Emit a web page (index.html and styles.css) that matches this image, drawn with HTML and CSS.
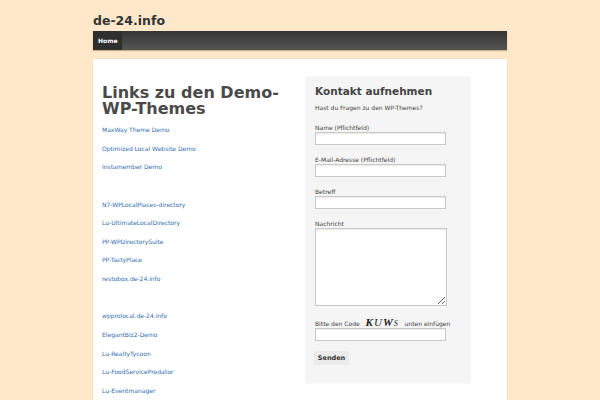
FILE: index.html
```html
<!DOCTYPE html>
<html lang="de">
<head>
    <meta charset="UTF-8">
    <meta name="viewport" content="width=device-width, initial-scale=1.0">
    <title>de-24.info</title>
    <link rel="stylesheet" href="styles.css">
</head>
<body>
    <div class="wrapper">
        <div class="site-title">de-24.info</div>
        <nav class="nav">
            <a class="nav-item active" href="#">Home</a>
        </nav>

        <div class="content">
            <div class="main">
                <h1>Links zu den Demo-WP-Themes</h1>
                <ul class="links">
                    <li><a href="#">MaxWay Theme Demo</a></li>
                    <li><a href="#">Optimized Local Website Demo</a></li>
                    <li><a href="#">Instamember Demo</a></li>
                    <li class="blank"></li>
                    <li><a href="#">N7-WPLocalPlaces-directory</a></li>
                    <li><a href="#">Lu-UltimateLocalDirectory</a></li>
                    <li><a href="#">PP-WPDirectorySuite</a></li>
                    <li><a href="#">PP-TastyPlace</a></li>
                    <li><a href="#">restobox.de-24.info</a></li>
                    <li class="blank"></li>
                    <li><a href="#">wpprolocal.de-24.info</a></li>
                    <li><a href="#">ElegantBiz2-Demo</a></li>
                    <li><a href="#">Lu-RealtyTycoon</a></li>
                    <li><a href="#">Lu-FoodServicePredator</a></li>
                    <li><a href="#">Lu-Eventmanager</a></li>
                </ul>
            </div>

            <div class="sidebar">
                <h2>Kontakt aufnehmen</h2>
                <p class="intro">Hast du Fragen zu den WP-Themes?</p>
                <div class="field">
                    <label>Name (Pflichtfeld)</label>
                    <input type="text">
                </div>
                <div class="field">
                    <label>E-Mail-Adresse (Pflichtfeld)</label>
                    <input type="text">
                </div>
                <div class="field">
                    <label>Betreff</label>
                    <input type="text">
                </div>
                <div class="field">
                    <label>Nachricht</label>
                    <textarea></textarea>
                </div>
                <div class="field">
                    <label class="captcha-label">Bitte den Code <span class="captcha">K<span class="u">U</span>W<span class="s">S</span></span> unten einfügen</label>
                    <input type="text">
                </div>
                <button class="send">Senden</button>
            </div>
        </div>
    </div>
</body>
</html>
```

FILE: styles.css
```css
body {
    font-family: "DejaVu Sans", Verdana, sans-serif;
    background-color: #fee8c9;
    margin: 0;
    color: #444;
}
.wrapper {
    width: 414px;
    margin-left: 93px;
}
.site-title {
    font-size: 12.5px;
    font-weight: bold;
    color: #333;
    height: 31px;
    line-height: 41px;
    box-sizing: border-box;
}
.nav {
    height: 19px;
    display: flex;
    background: linear-gradient(#363636, #555555);
    box-shadow: 0 1px 1px rgba(120, 90, 40, 0.4);
}
.nav-item {
    color: #fff;
    font-size: 6px;
    font-weight: bold;
    text-decoration: none;
    padding: 0 5px;
    line-height: 19px;
}
.nav-item.active {
    background: #2f2f2f;
}
.content {
    margin-top: 9px;
    background: #fff;
    display: flex;
    padding: 18px 0 20px 9px;
    min-height: 340px;
    box-shadow: 0 0 1px rgba(200, 170, 120, 0.5);
}
.main {
    width: 196px;
}
h1 {
    font-size: 16px;
    line-height: 15.5px;
    margin: 8px 0 5px 0;
    color: #4a4a4a;
}
.links {
    list-style: none;
    margin: 0;
    padding: 0;
}
.links li {
    height: 18.65px;
    font-size: 6px;
    line-height: 18.65px;
}
.links a {
    color: #2f6db3;
    text-decoration: none;
}
.sidebar {
    margin-left: 8px;
    width: 164px;
    box-sizing: border-box;
    background: #f5f5f5;
    padding: 7px 9px 18px 9px;
    align-self: flex-start;
    box-shadow: 0 0 2px rgba(0, 0, 0, 0.08);
}
h2 {
    font-size: 10.5px;
    line-height: 14px;
    margin: 0 0 6px 0;
    color: #444;
}
.intro {
    font-size: 6px;
    line-height: 8px;
    margin: 0 0 12px 0;
}
.field {
    margin-bottom: 11px;
}
.field label {
    display: block;
    font-size: 6px;
    line-height: 8px;
    margin-bottom: 0;
}
.field input {
    display: block;
    width: 131px;
    height: 13px;
    box-sizing: border-box;
    border: 1px solid #c8c8c8;
    background: #fff;
    box-shadow: inset 0 1px 1px rgba(0, 0, 0, 0.08);
    margin: 0;
}
.field textarea {
    display: block;
    width: 132px;
    height: 78px;
    box-sizing: border-box;
    border: 1px solid #c8c8c8;
    background: #fff;
    margin: 0;
    box-shadow: inset 0 1px 1px rgba(0, 0, 0, 0.08);
}
.captcha-label {
    margin-top: 10px;
    height: 10px;
    line-height: 10px !important;
    margin-bottom: 1px !important;
}
.captcha {
    font-family: "Liberation Serif", serif;
    font-style: italic;
    font-weight: bold;
    font-size: 11px;
    color: #222;
    margin: 0 4px;
    letter-spacing: 1px;
}
.captcha .u {
    font-weight: normal;
}
.captcha .s {
    font-size: 8px;
    font-weight: normal;
}
.send {
    display: block;
    margin-top: -1px;
    margin-left: -1px;
    background: #ebebeb;
    border: none;
    font-family: "DejaVu Sans", sans-serif;
    font-size: 6.5px;
    font-weight: bold;
    color: #333;
    width: 35px;
    height: 14px;
    padding: 0;
}
```
